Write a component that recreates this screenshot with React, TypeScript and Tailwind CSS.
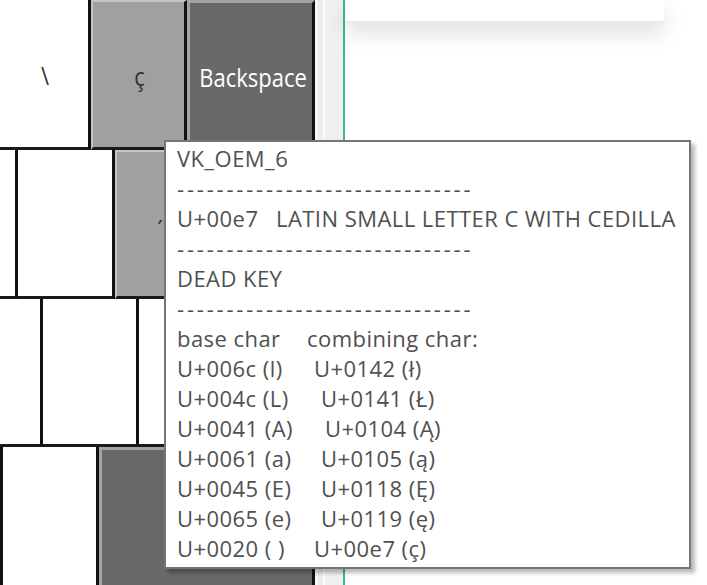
import React from "react";

type Key = {
  w: string;
  tone: "white" | "grey" | "dark";
  label?: string;
  labelClass?: string;
};

const rows: { h: string; keys: Key[] }[] = [
  {
    h: "h-[150px]",
    keys: [
      { w: "w-[91px]", tone: "white", label: "\\", labelClass: "justify-center pl-[2px] pt-[2px]" },
      { w: "w-[96px]", tone: "grey", label: "ç", labelClass: "justify-center pl-[2px] pt-[2px]" },
      { w: "w-[128px]", tone: "dark", label: "Backspace", labelClass: "justify-center pl-[4px] pt-[4px] text-white" },
    ],
  },
  {
    h: "h-[149px]",
    keys: [
      { w: "w-[18px]", tone: "white" },
      { w: "w-[97px]", tone: "white" },
      { w: "w-[97px]", tone: "grey", label: "´", labelClass: "pl-[40px] pt-[12px]" },
      { w: "w-[103px]", tone: "white" },
    ],
  },
  {
    h: "h-[148px]",
    keys: [
      { w: "w-[43px]", tone: "white" },
      { w: "w-[96px]", tone: "white" },
      { w: "w-[96px]", tone: "white" },
      { w: "w-[80px]", tone: "white" },
    ],
  },
  {
    h: "h-[149px]",
    keys: [
      { w: "w-[3px]", tone: "white" },
      { w: "w-[96px]", tone: "white" },
      { w: "w-[216px]", tone: "dark" },
    ],
  },
];

const toneClass = {
  white: "bg-white",
  grey: "bg-[#a0a0a0] border-l-2 border-t-2 border-l-[#c4c4c4] border-t-[#c4c4c4]",
  dark: "bg-[#696969] border-l-[3px] border-t-[3px] border-l-[#a3a3a3] border-t-[#a3a3a3]",
};

const pairs = [
  { base: "U+006c (l)", comb: "U+0142 (ł)", w: "w-[137px]" },
  { base: "U+004c (L)", comb: "U+0141 (Ł)", w: "w-[144px]" },
  { base: "U+0041 (A)", comb: "U+0104 (Ą)", w: "w-[148px]" },
  { base: "U+0061 (a)", comb: "U+0105 (ą)", w: "w-[144px]" },
  { base: "U+0045 (E)", comb: "U+0118 (Ę)", w: "w-[144px]" },
  { base: "U+0065 (e)", comb: "U+0119 (ę)", w: "w-[144px]" },
  { base: "U+0020 ( )", comb: "U+00e7 (ç)", w: "w-[137px]" },
];

const Dashes = () => (
  <div className="tracking-[2.8px]">------------------------------</div>
);

export default function App() {
  return (
    <div
      className="relative flex h-[585px] w-[707px] overflow-hidden bg-white text-[22px] leading-[30px]"
      style={{ fontFamily: '"Open Sans", "Noto Sans", sans-serif' }}
    >
      {/* keyboard panel */}
      <div className="flex w-[343px] shrink-0 flex-col bg-[#f0f0f0]">
        <div className="h-[4px]" />
        <div className="h-[2px] w-[323px] bg-[#7b7b7b]" />
        <div className="h-[1px]" />
        <div className="flex">
          <div className="w-[315px] shrink-0">
            {rows.map((row, i) => (
              <div key={i} className={`flex ${row.h}`}>
                {row.keys.map((k, j) => (
                  <div
                    key={j}
                    className={`flex shrink-0 items-center border-r-[3px] border-b-[3px] border-r-[#111] border-b-[#1a1a1a] text-[#333] ${k.w} ${toneClass[k.tone]} ${k.labelClass ?? ""}`}
                  >
                    {k.label && (
                      <span className="inline-block scale-y-[1.15]">{k.label}</span>
                    )}
                  </div>
                ))}
              </div>
            ))}
          </div>
          <div className="w-[3px] bg-[#f8f8f8]" />
          <div className="w-[5px] bg-[#ededed]" />
          <div className="w-[2px] bg-[#fbfbfb]" />
          <div className="flex-1 bg-[#f0f0f0]" />
        </div>
      </div>

      <div className="w-[2px] shrink-0 bg-[#3dba7f]" />

      {/* right side */}
      <div className="flex-1 bg-white">
        <div className="h-[23px] w-[319px] border-b-2 border-[#e9e9e9] bg-white shadow-[0_10px_22px_rgba(0,0,0,0.13)]" />
      </div>

      {/* tooltip */}
      <div className="absolute left-[164px] top-[140px] h-[429px] w-[527px] border-2 border-[#767676] bg-white pl-[11px] pt-[1px] tracking-[0.45px] text-[#505050] shadow-[4px_4px_4px_rgba(0,0,0,0.28)]">
        <div>VK_OEM_6</div>
        <Dashes />
        <div className="flex">
          <span className="w-[99px] shrink-0">U+00e7</span>
          <span className="whitespace-nowrap">LATIN SMALL LETTER C WITH CEDILLA</span>
        </div>
        <Dashes />
        <div>DEAD KEY</div>
        <Dashes />
        <div className="flex">
          <span className="w-[130px] shrink-0">base char</span>
          <span>combining char:</span>
        </div>
        {pairs.map((p) => (
          <div key={p.base} className="flex whitespace-pre">
            <span className={`shrink-0 ${p.w}`}>{p.base}</span>
            <span>{p.comb}</span>
          </div>
        ))}
      </div>
    </div>
  );
}
